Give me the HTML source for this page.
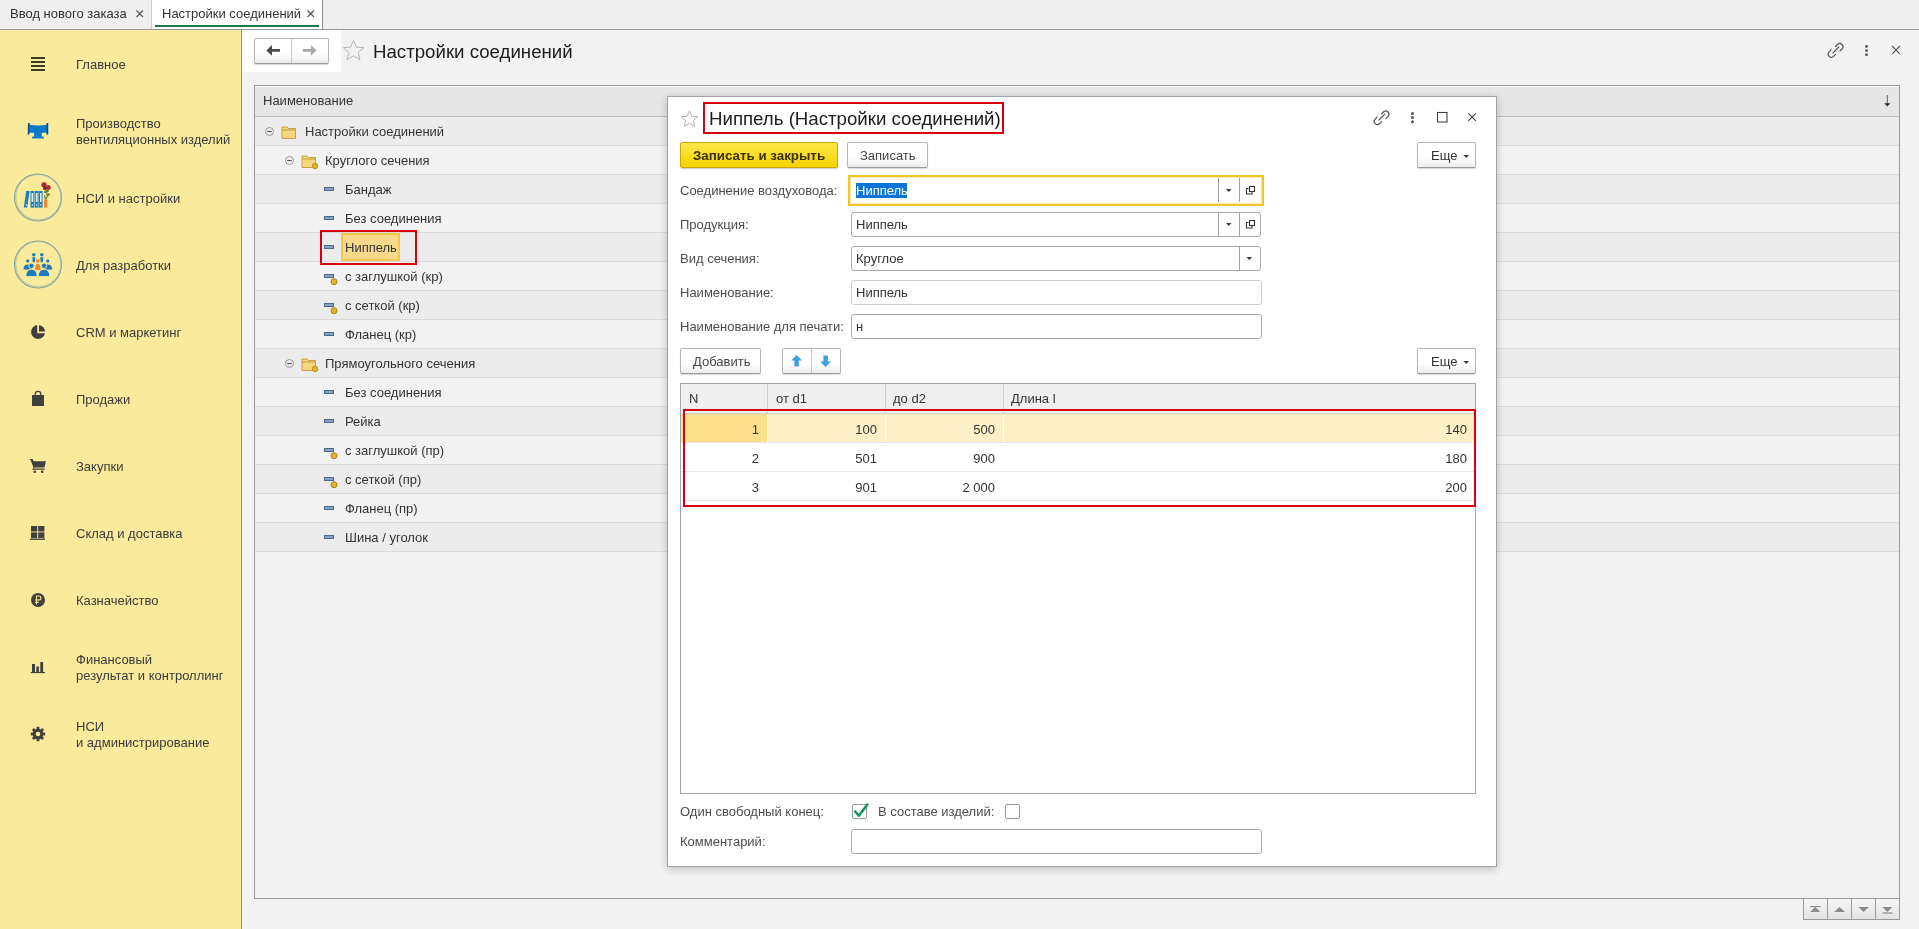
<!DOCTYPE html>
<html><head><meta charset="utf-8">
<style>
*{box-sizing:border-box;margin:0;padding:0}
html,body{width:1919px;height:929px;overflow:hidden;background:#f2f2f2;font-family:"Liberation Sans",sans-serif;font-size:13px;color:#333}
.a{position:absolute}
.t{will-change:transform;position:absolute;white-space:nowrap;line-height:15px;font-size:13px}
svg{position:absolute;overflow:visible}
/* tabs */
#tabbar{left:0;top:0;width:1919px;height:30px;background:#efefef;border-bottom:1px solid #999}
/* sidebar */
#side{left:0;top:30px;width:242px;height:899px;background:#faea9b;border-right:1px solid #9a9170}
.st{color:#3b3b3b}
/* tree */
#tree{left:254px;top:85px;width:1646px;height:814px;border:1px solid #999;background:#f2f2f2}
.th{left:0;top:0;width:1644px;height:31px;background:#e6e6e6;border-bottom:1px solid #bdbdbd;border-top:1px solid #f5f5f5}
.row{position:absolute;left:0;width:1644px;height:29px;border-bottom:1px solid #dadada}
.r1{background:#ececec}.r2{background:#f2f2f2}
/* dialog */
#dlg{left:667px;top:96px;width:830px;height:771px;background:#fff;border:1px solid #a3a3a3;box-shadow:0 2px 8px rgba(0,0,0,.22)}
.btn{position:absolute;height:26px;border:1px solid #b5b5b5;border-bottom-color:#9a9a9a;border-radius:2px;background:linear-gradient(#fff 0%,#fff 60%,#ededed 100%);box-shadow:0 1px 1px rgba(0,0,0,.15)}
.fld{position:absolute;height:25px;border:1px solid #a9a9a9;border-radius:3px;background:#fff}
.lbl{color:#4d4d4d}
.red{position:absolute;border:2px solid #d8000c}
</style></head><body>

<!-- TAB BAR -->
<div id="tabbar" class="a">
  <div class="t" style="left:10px;top:6px;color:#333">Ввод нового заказа</div>
  <div class="a" style="left:151px;top:0;width:1px;height:29px;background:#d0d0d0"></div>
  <div class="a" style="left:152px;top:0;width:171px;height:29px;background:#fff;border-right:1px solid #8a8a8a"></div>
  <div class="t" style="left:162px;top:6px;color:#333">Настройки соединений</div>
  <div class="a" style="left:155px;top:25px;width:164px;height:2px;background:#1d7a46"></div>
  <svg style="left:0;top:0" width="330" height="30"><path d="M136.5 10.5 l6.5 6.5 M143 10.5 l-6.5 6.5 M307.5 10.5 l6.5 6.5 M314 10.5 l-6.5 6.5" stroke="#555" stroke-width="1.1"/></svg>
</div>


<!-- SIDEBAR -->
<div id="side" class="a"></div>
<div class="t st" style="left:76px;top:57px">Главное</div>
<div class="t st" style="left:76px;top:116px">Производство</div>
<div class="t st" style="left:76px;top:132px">вентиляционных изделий</div>
<div class="t st" style="left:76px;top:191px">НСИ и настройки</div>
<div class="t st" style="left:76px;top:258px">Для разработки</div>
<div class="t st" style="left:76px;top:325px">CRM и маркетинг</div>
<div class="t st" style="left:76px;top:392px">Продажи</div>
<div class="t st" style="left:76px;top:459px">Закупки</div>
<div class="t st" style="left:76px;top:526px">Склад и доставка</div>
<div class="t st" style="left:76px;top:593px">Казначейство</div>
<div class="t st" style="left:76px;top:652px">Финансовый</div>
<div class="t st" style="left:76px;top:668px">результат и контроллинг</div>
<div class="t st" style="left:76px;top:719px">НСИ</div>
<div class="t st" style="left:76px;top:735px">и администрирование</div>


<!-- SIDEBAR ICONS -->
<svg style="left:0;top:0" width="242" height="929">
 <g fill="#3e3a2c">
  <rect x="31" y="57" width="14" height="2"/><rect x="31" y="61" width="14" height="2"/><rect x="31" y="65" width="14" height="2"/><rect x="31" y="69" width="14" height="2"/>
 </g>
 <!-- T piece -->
 <path d="M28 123 h1.5 v1.8 q9.5 1.5 17.3 0 v-1.8 h1.5 v11.5 h-1.5 v-1.8 h-5 v3.8 h2 v2 h-11.7 v-2 h2 v-3.8 h-5 v1.8 h-1.5z" fill="#0b7bc9"/>
 <rect x="28" y="123" width="1.4" height="11.5" fill="#0a4f7a"/><rect x="46.6" y="123" width="1.4" height="11.5" fill="#0a4f7a"/>
 <!-- circle icons -->
 <circle cx="38" cy="197.5" r="23.5" fill="none" stroke="#86a392" stroke-width="1.1"/>
 <circle cx="38.3" cy="197.2" r="22.6" fill="none" stroke="#9fb8b0" stroke-width="0.8"/>
 <g>
  <path d="M26.2 191 h3.4 l-2.4 16.6 h-3.4z" fill="#1c7fc6"/>
  <rect x="30.5" y="191" width="3.8" height="16.6" fill="#1c7fc6"/>
  <rect x="34.8" y="191" width="3.8" height="16.6" fill="#1c7fc6"/>
  <rect x="39" y="191" width="3.6" height="16.6" fill="#1c7fc6"/>
  <rect x="31.5" y="193" width="1.8" height="9" fill="#d8ecfa"/><rect x="35.8" y="193" width="1.8" height="9" fill="#d8ecfa"/><rect x="40" y="193" width="1.6" height="9" fill="#d8ecfa"/>
  <circle cx="26.5" cy="205" r=".7" fill="#fff"/><circle cx="32.4" cy="205" r=".7" fill="#fff"/><circle cx="36.7" cy="205" r=".7" fill="#fff"/><circle cx="40.8" cy="205" r=".7" fill="#fff"/>
  <rect x="44" y="199.5" width="3.4" height="8.1" fill="#f08c2a"/>
  <path d="M45.5 199.5 l-1-4 M45.8 199 l2.5-4" stroke="#6b7a30" stroke-width="1.2"/>
  <ellipse cx="46.5" cy="191.5" rx="2.6" ry="1.4" fill="#6d7c34" transform="rotate(-20 46.5 191.5)"/>
  <ellipse cx="48" cy="194.5" rx="2.2" ry="1.2" fill="#7c8a3c"/>
  <circle cx="44" cy="184.8" r="2.6" fill="#a02828"/><circle cx="48.2" cy="187.6" r="2.5" fill="#a83232"/><circle cx="44.8" cy="188.4" r="1.8" fill="#8e2424"/>
 </g>
 <circle cx="38" cy="264.5" r="23.5" fill="none" stroke="#86a392" stroke-width="1.1"/>
 <circle cx="38.3" cy="264.2" r="22.6" fill="none" stroke="#9fb8b0" stroke-width="0.8"/>
 <g fill="#1a7bbf">
  <circle cx="33.8" cy="254.8" r="1.7"/><circle cx="41.8" cy="254.8" r="1.7"/>
  <path d="M32.2 257.3 h3.2 l-.6 5 h-2z"/><path d="M40.2 257.3 h3.2 l-.6 5 h-2z"/>
 </g>
 <g fill="#f08a24"><circle cx="37.8" cy="260.8" r="1.9"/><path d="M35 270 q0-6.5 2.8-6.5 q2.8 0 2.8 6.5z"/></g>
 <g fill="#1a7bbf" stroke="#faea9b" stroke-width="0.9">
  <circle cx="27.8" cy="261" r="2.1"/><circle cx="47.8" cy="261" r="2.1"/>
  <path d="M23 270 q0-6 4.8-6 q4.8 0 4.8 6z"/><path d="M43 270 q0-6 4.8-6 q4.8 0 4.8 6z"/>
  <circle cx="31.5" cy="265.8" r="2.7"/><circle cx="44" cy="265.8" r="2.7"/>
  <path d="M25.8 276.5 q0-7.2 5.7-7.2 q5.7 0 5.7 7.2z"/><path d="M38.3 276.5 q0-7.2 5.7-7.2 q5.7 0 5.7 7.2z"/>
 </g>
 <!-- pie -->
 <path d="M37.2 325 A7 7 0 1 0 45 333.2 L37.2 333.2 Z" fill="#3f3f3f"/>
 <path d="M39 325.2 A6.4 6.4 0 0 1 45 331.4 L39 331.4 Z" fill="#3f3f3f"/>
 <!-- bag -->
 <rect x="32" y="395" width="12" height="11" fill="#3f3f3f"/>
 <path d="M35.2 397 v-2.8 a2.8 2.8 0 0 1 5.6 0 v2.8" stroke="#3f3f3f" stroke-width="1.3" fill="none"/>
 <!-- cart -->
 <path d="M30 459 h2.6 l1 2.2 h12.4 l-1.6 6.4 h-9.8 l-0.5 1 h10.6 v1.2 h-12.4 l1.2-2.3 l-2.8-7.3 h-0.7z" fill="#3f3f3f"/>
 <circle cx="34.8" cy="471.8" r="1.3" fill="#3f3f3f"/><circle cx="42.2" cy="471.8" r="1.3" fill="#3f3f3f"/>
 <!-- grid -->
 <g fill="#3f3f3f"><rect x="31" y="526" width="6.2" height="5.5"/><rect x="38.2" y="526" width="6.2" height="5.5"/><rect x="31" y="532.4" width="6.2" height="5.5"/><rect x="38.2" y="532.4" width="6.2" height="5.5"/><rect x="30.2" y="538.5" width="14.8" height="1.4"/></g>
 <!-- ruble -->
 <circle cx="38" cy="600" r="7" fill="#3f3f3f"/>
 <path d="M36.5 604.5 v-8.5 h2.4 a2 2 0 0 1 0 4 h-3.8 M35 602.2 h4" stroke="#faea9b" stroke-width="1.1" fill="none"/>
 <!-- bars -->
 <g fill="#3f3f3f"><rect x="32" y="664" width="3" height="8"/><rect x="36.3" y="666.5" width="2.6" height="5.5"/><rect x="40.3" y="662" width="2.8" height="10"/><rect x="30.8" y="672" width="14.2" height="1.1"/></g>
 <!-- gear -->
 <g transform="translate(38 734)" fill="#3f3f3f">
  <circle r="5.3"/><rect x="-1.4" y="-7.2" width="2.8" height="3.2" transform="rotate(0)"/><rect x="-1.4" y="-7.2" width="2.8" height="3.2" transform="rotate(45)"/><rect x="-1.4" y="-7.2" width="2.8" height="3.2" transform="rotate(90)"/><rect x="-1.4" y="-7.2" width="2.8" height="3.2" transform="rotate(135)"/><rect x="-1.4" y="-7.2" width="2.8" height="3.2" transform="rotate(180)"/><rect x="-1.4" y="-7.2" width="2.8" height="3.2" transform="rotate(225)"/><rect x="-1.4" y="-7.2" width="2.8" height="3.2" transform="rotate(270)"/><rect x="-1.4" y="-7.2" width="2.8" height="3.2" transform="rotate(315)"/>
  <circle r="2.3" fill="#faea9b"/>
 </g>
</svg>

<!-- white nav patch -->
<div class="a" style="left:242px;top:30px;width:99px;height:42px;background:#fff"></div>


<!-- NAV -->
<div class="btn" style="left:254px;top:38px;width:75px;height:26px"></div>
<div class="a" style="left:291px;top:39px;width:1px;height:24px;background:#c9c9c9"></div>
<svg style="left:0;top:0" width="1919" height="120">
 <path d="M266.4 50.4 l5.6-5.4 v4 h8 v2.8 h-8 v4z" fill="#4a4a4a"/>
 <path d="M316.5 50.4 l-5.6-5.4 v4 h-8 v2.8 h8 v4z" fill="#a9a9a9"/>
 <path d="M353.5 40.5 l2.9 6.6 l7.4 .6 l-5.6 4.8 l1.8 7.2 l-6.5-3.9 l-6.5 3.9 l1.8-7.2 l-5.6-4.8 l7.4-.6z" fill="none" stroke="#b4b4b4" stroke-width="1"/>
 <!-- top-right icons -->
 <g fill="none" stroke="#505050" stroke-width="1.15" stroke-linecap="round">
  <path d="M1835.5 46.5 l2.2-2.2 a3.2 3.2 0 0 1 4.5 4.5 l-2.2 2.2"/>
  <path d="M1835.6 54.4 l-2.2 2.2 a3.2 3.2 0 0 1 -4.5 -4.5 l2.2 -2.2"/>
  <path d="M1833 52.8 l5.8-5.8"/>
 </g>
 <g fill="#5a5a5a"><circle cx="1866.5" cy="46.5" r="1.45"/><circle cx="1866.5" cy="50.6" r="1.45"/><circle cx="1866.5" cy="54.7" r="1.45"/></g>
 <path d="M1892.2 46.2 l7.6 7.6 M1899.8 46.2 l-7.6 7.6" stroke="#4a4a4a" stroke-width="1.1"/>
</svg>
<div class="t" style="left:373px;top:41px;font-size:18.67px;line-height:22px;color:#1c1c1c">Настройки соединений</div>

<!-- TREE -->
<div id="tree" class="a">
 <div class="a th"></div>
 <div class="t" style="left:8px;top:7px;color:#333">Наименование</div>

 <div class="row r1" style="top:31px"></div>
 <div class="t" style="left:50px;top:38px;color:#333">Настройки соединений</div>
 <div class="row r2" style="top:60px"></div>
 <div class="t" style="left:70px;top:67px;color:#333">Круглого сечения</div>
 <div class="row r1" style="top:89px"></div>
 <div class="t" style="left:90px;top:96px;color:#333">Бандаж</div>
 <div class="row r2" style="top:118px"></div>
 <div class="t" style="left:90px;top:125px;color:#333">Без соединения</div>
 <div class="row r1" style="top:147px"></div>
 <div class="t" style="left:90px;top:154px;color:#333">Ниппель</div>
 <div class="row r2" style="top:176px"></div>
 <div class="t" style="left:90px;top:183px;color:#333">с заглушкой (кр)</div>
 <div class="row r1" style="top:205px"></div>
 <div class="t" style="left:90px;top:212px;color:#333">с сеткой (кр)</div>
 <div class="row r2" style="top:234px"></div>
 <div class="t" style="left:90px;top:241px;color:#333">Фланец (кр)</div>
 <div class="row r1" style="top:263px"></div>
 <div class="t" style="left:70px;top:270px;color:#333">Прямоугольного сечения</div>
 <div class="row r2" style="top:292px"></div>
 <div class="t" style="left:90px;top:299px;color:#333">Без соединения</div>
 <div class="row r1" style="top:321px"></div>
 <div class="t" style="left:90px;top:328px;color:#333">Рейка</div>
 <div class="row r2" style="top:350px"></div>
 <div class="t" style="left:90px;top:357px;color:#333">с заглушкой (пр)</div>
 <div class="row r1" style="top:379px"></div>
 <div class="t" style="left:90px;top:386px;color:#333">с сеткой (пр)</div>
 <div class="row r2" style="top:408px"></div>
 <div class="t" style="left:90px;top:415px;color:#333">Фланец (пр)</div>
 <div class="row r1" style="top:437px"></div>
 <div class="t" style="left:90px;top:444px;color:#333">Шина / уголок</div>
 <svg style="left:0;top:0" width="1646" height="40"><path d="M1632.3 9 v11" stroke="#666" stroke-width="1"/><path d="M1629.3 17.2 h6 l-3 3.2z" fill="#333"/></svg>
</div>
<svg style="left:0;top:0" width="1919" height="929">
<circle cx="269.5" cy="131.5" r="4" fill="none" stroke="#9a9a9a" stroke-width="1"/><path d="M267.2 131.5 h4.6" stroke="#555" stroke-width="1.1"/>
<path d="M282 127.0 h5 l1.5 1.5 h7 v10 h-13.5z" fill="#f6d67e" stroke="#caa043" stroke-width="1"/><path d="M282 130.0 h13.5" stroke="#c49a3c" stroke-width="1"/>
<circle cx="289.5" cy="160.5" r="4" fill="none" stroke="#9a9a9a" stroke-width="1"/><path d="M287.2 160.5 h4.6" stroke="#555" stroke-width="1.1"/>
<path d="M302 156.0 h5 l1.5 1.5 h7 v10 h-13.5z" fill="#f6d67e" stroke="#caa043" stroke-width="1"/><path d="M302 159.0 h13.5" stroke="#c49a3c" stroke-width="1"/>
<circle cx="315" cy="166.0" r="2.8" fill="#e0b42a" stroke="#b08a10" stroke-width=".8"/>
<rect x="324.0" y="187.0" width="10" height="4" fill="#4a6889"/><rect x="325.0" y="188.0" width="8" height="2" fill="#86a3c2"/>
<rect x="324.0" y="216.0" width="10" height="4" fill="#4a6889"/><rect x="325.0" y="217.0" width="8" height="2" fill="#86a3c2"/>
<rect x="324.0" y="245.0" width="10" height="4" fill="#4a6889"/><rect x="325.0" y="246.0" width="8" height="2" fill="#86a3c2"/>
<rect x="324.0" y="274.0" width="10" height="4" fill="#4a6889"/><rect x="325.0" y="275.0" width="8" height="2" fill="#86a3c2"/>
<circle cx="334.0" cy="281.7" r="3" fill="#e2b32c" stroke="#9c7a12" stroke-width=".9"/>
<rect x="324.0" y="303.0" width="10" height="4" fill="#4a6889"/><rect x="325.0" y="304.0" width="8" height="2" fill="#86a3c2"/>
<circle cx="334.0" cy="310.7" r="3" fill="#e2b32c" stroke="#9c7a12" stroke-width=".9"/>
<rect x="324.0" y="332.0" width="10" height="4" fill="#4a6889"/><rect x="325.0" y="333.0" width="8" height="2" fill="#86a3c2"/>
<circle cx="289.5" cy="363.5" r="4" fill="none" stroke="#9a9a9a" stroke-width="1"/><path d="M287.2 363.5 h4.6" stroke="#555" stroke-width="1.1"/>
<path d="M302 359.0 h5 l1.5 1.5 h7 v10 h-13.5z" fill="#f6d67e" stroke="#caa043" stroke-width="1"/><path d="M302 362.0 h13.5" stroke="#c49a3c" stroke-width="1"/>
<circle cx="315" cy="369.0" r="2.8" fill="#e0b42a" stroke="#b08a10" stroke-width=".8"/>
<rect x="324.0" y="390.0" width="10" height="4" fill="#4a6889"/><rect x="325.0" y="391.0" width="8" height="2" fill="#86a3c2"/>
<rect x="324.0" y="419.0" width="10" height="4" fill="#4a6889"/><rect x="325.0" y="420.0" width="8" height="2" fill="#86a3c2"/>
<rect x="324.0" y="448.0" width="10" height="4" fill="#4a6889"/><rect x="325.0" y="449.0" width="8" height="2" fill="#86a3c2"/>
<circle cx="334.0" cy="455.7" r="3" fill="#e2b32c" stroke="#9c7a12" stroke-width=".9"/>
<rect x="324.0" y="477.0" width="10" height="4" fill="#4a6889"/><rect x="325.0" y="478.0" width="8" height="2" fill="#86a3c2"/>
<circle cx="334.0" cy="484.7" r="3" fill="#e2b32c" stroke="#9c7a12" stroke-width=".9"/>
<rect x="324.0" y="506.0" width="10" height="4" fill="#4a6889"/><rect x="325.0" y="507.0" width="8" height="2" fill="#86a3c2"/>
<rect x="324.0" y="535.0" width="10" height="4" fill="#4a6889"/><rect x="325.0" y="536.0" width="8" height="2" fill="#86a3c2"/>
</svg>

<!-- DIALOG -->
<div id="dlg" class="a"></div>
<svg style="left:0;top:0" width="1919" height="929">
 <path d="M689.5 110.8 l2.4 5.4 l5.9 .5 l-4.5 3.9 l1.4 5.8 l-5.2-3.1 l-5.2 3.1 l1.4-5.8 l-4.5-3.9 l5.9-.5z" fill="none" stroke="#b4b4b4" stroke-width="1"/>
 <g fill="none" stroke="#505050" stroke-width="1.15" stroke-linecap="round">
  <path d="M1381.5 114 l2.2-2.2 a3.2 3.2 0 0 1 4.5 4.5 l-2.2 2.2"/>
  <path d="M1381.6 121.6 l-2.2 2.2 a3.2 3.2 0 0 1 -4.5 -4.5 l2.2 -2.2"/>
  <path d="M1379 120 l5.8-5.8"/>
 </g>
 <g fill="#555"><circle cx="1412.5" cy="113.5" r="1.5"/><circle cx="1412.5" cy="117.6" r="1.5"/><circle cx="1412.5" cy="121.7" r="1.5"/></g>
 <rect x="1437.5" y="112.5" width="9.5" height="9.5" fill="none" stroke="#444" stroke-width="1.1"/>
 <path d="M1468.3 113.3 l7.6 7.6 M1475.9 113.3 l-7.6 7.6" stroke="#444" stroke-width="1.2"/>
</svg>
<div class="t" style="left:709px;top:108px;font-size:18.67px;line-height:22px;color:#1c1c1c">Ниппель (Настройки соединений)</div>
<div class="red" style="left:703px;top:102px;width:301px;height:32px"></div>

<!-- buttons -->
<div class="a" style="left:680px;top:142px;width:158px;height:26px;border:1px solid #c9a800;border-radius:2px;background:linear-gradient(#ffe84a,#f4d300);box-shadow:0 1px 1px rgba(0,0,0,.2)"></div>
<div class="t" style="left:693px;top:148px;font-weight:bold;font-size:13.33px;color:#3a3000">Записать и закрыть</div>
<div class="btn" style="left:847px;top:142px;width:81px;height:26px"></div>
<div class="t" style="left:860px;top:148px;color:#444">Записать</div>
<div class="btn" style="left:1417px;top:142px;width:59px;height:26px"></div>
<div class="t" style="left:1431px;top:148px;color:#333">Еще</div>
<svg style="left:0;top:0" width="1919" height="929"><path d="M1463.3 155 h5.8 l-2.9 3z" fill="#444"/></svg>

<!-- fields -->
<div class="t lbl" style="left:680px;top:183px">Соединение воздуховода:</div>
<div class="a" style="left:848px;top:175px;width:416px;height:31px;border:2px solid #f2c62c;box-shadow:inset 0 0 0 1px #fbeab0;background:#fff"></div>
<div class="a" style="left:856px;top:183px;width:51px;height:15px;background:#0a74d8"></div>
<div class="t" style="left:856px;top:183px;color:#fff">Ниппель</div>
<div class="a" style="left:1218px;top:178px;width:1px;height:24px;background:#a0a0a0"></div>
<div class="a" style="left:1239px;top:178px;width:1px;height:24px;background:#a0a0a0"></div>

<div class="t lbl" style="left:680px;top:217px">Продукция:</div>
<div class="fld" style="left:851px;top:212px;width:410px"></div>
<div class="t" style="left:856px;top:217px">Ниппель</div>
<div class="a" style="left:1218px;top:213px;width:1px;height:23px;background:#a0a0a0"></div>
<div class="a" style="left:1239px;top:213px;width:1px;height:23px;background:#a0a0a0"></div>

<div class="t lbl" style="left:680px;top:251px">Вид сечения:</div>
<div class="fld" style="left:851px;top:246px;width:410px"></div>
<div class="t" style="left:856px;top:251px">Круглое</div>
<div class="a" style="left:1239px;top:247px;width:1px;height:23px;background:#a0a0a0"></div>

<div class="t lbl" style="left:680px;top:285px">Наименование:</div>
<div class="fld" style="left:851px;top:280px;width:411px;border-color:#cdcdcd"></div>
<div class="t" style="left:856px;top:285px">Ниппель</div>

<div class="t lbl" style="left:680px;top:319px">Наименование для печати:</div>
<div class="fld" style="left:851px;top:314px;width:411px"></div>
<div class="t" style="left:856px;top:319px">н</div>

<svg style="left:0;top:0" width="1919" height="929">
 <path d="M1226 189 h5.5 l-2.75 3z" fill="#3a3a3a"/>
 <path d="M1226 223 h5.5 l-2.75 3z" fill="#3a3a3a"/>
 <path d="M1246.5 257 h5.5 l-2.75 3z" fill="#3a3a3a"/>
 <g fill="none" stroke="#333" stroke-width="1.1">
  <path d="M1248.5 188.5 h-2 v5.5 h5.5 v-2"/><rect x="1249.5" y="186.5" width="5" height="5"/>
  <path d="M1248.5 222.5 h-2 v5.5 h5.5 v-2"/><rect x="1249.5" y="220.5" width="5" height="5"/>
 </g>
</svg>

<!-- table toolbar -->
<div class="btn" style="left:680px;top:348px;width:81px;height:26px"></div>
<div class="t" style="left:693px;top:354px;color:#444">Добавить</div>
<div class="btn" style="left:782px;top:348px;width:59px;height:26px"></div>
<div class="a" style="left:811px;top:349px;width:1px;height:24px;background:#c9c9c9"></div>
<svg style="left:0;top:0" width="1919" height="929">
 <path d="M796.6 355 l5.4 5.6 h-3.2 v6 h-4.4 v-6 h-3.2z" fill="#3d9fe0"/>
 <path d="M825.6 367 l5.4 -5.6 h-3.2 v-6 h-4.4 v6 h-3.2z" fill="#3d9fe0"/>
</svg>
<div class="btn" style="left:1417px;top:348px;width:59px;height:26px"></div>
<div class="t" style="left:1431px;top:354px;color:#333">Еще</div>
<svg style="left:0;top:0" width="1919" height="929"><path d="M1463.3 361 h5.8 l-2.9 3z" fill="#444"/></svg>


<!-- GRID TABLE -->
<div class="a" style="left:680px;top:383px;width:796px;height:411px;border:1px solid #a5a5a5;background:#fff"></div>
<div class="a" style="left:681px;top:384px;width:794px;height:30px;background:#efefef;border-bottom:1px solid #d5d5d5"></div>
<div class="a" style="left:767px;top:384px;width:1px;height:30px;background:#d0d0d0"></div>
<div class="a" style="left:885px;top:384px;width:1px;height:30px;background:#d0d0d0"></div>
<div class="a" style="left:1003px;top:384px;width:1px;height:30px;background:#d0d0d0"></div>
<div class="t" style="left:689px;top:391px">N</div>
<div class="t" style="left:776px;top:391px">от d1</div>
<div class="t" style="left:893px;top:391px">до d2</div>
<div class="t" style="left:1011px;top:391px">Длина l</div>
<!-- rows -->
<div class="a" style="left:681px;top:414px;width:794px;height:29px;background:#fdf0c6;border-bottom:1px solid #e6e6e6"></div>
<div class="a" style="left:681px;top:414px;width:86px;height:28px;background:#fde08c"></div>
<div class="a" style="left:767px;top:414px;width:1px;height:28px;background:#fff"></div>
<div class="a" style="left:885px;top:414px;width:1px;height:28px;background:#fff"></div>
<div class="a" style="left:1003px;top:414px;width:1px;height:28px;background:#fff"></div>
<div class="a" style="left:681px;top:443px;width:794px;height:29px;background:#fff;border-bottom:1px solid #e6e6e6"></div>
<div class="a" style="left:681px;top:472px;width:794px;height:29px;background:#fff;border-bottom:1px solid #e6e6e6"></div>
<div class="t" style="left:681px;top:422px;width:78px;text-align:right">1</div>
<div class="t" style="left:768px;top:422px;width:109px;text-align:right">100</div>
<div class="t" style="left:886px;top:422px;width:109px;text-align:right">500</div>
<div class="t" style="left:1004px;top:422px;width:463px;text-align:right">140</div>
<div class="t" style="left:681px;top:451px;width:78px;text-align:right">2</div>
<div class="t" style="left:768px;top:451px;width:109px;text-align:right">501</div>
<div class="t" style="left:886px;top:451px;width:109px;text-align:right">900</div>
<div class="t" style="left:1004px;top:451px;width:463px;text-align:right">180</div>
<div class="t" style="left:681px;top:480px;width:78px;text-align:right">3</div>
<div class="t" style="left:768px;top:480px;width:109px;text-align:right">901</div>
<div class="t" style="left:886px;top:480px;width:109px;text-align:right">2 000</div>
<div class="t" style="left:1004px;top:480px;width:463px;text-align:right">200</div>
<div class="red" style="left:683px;top:409px;width:793px;height:98px"></div>

<!-- bottom -->
<div class="t lbl" style="left:680px;top:804px">Один свободный конец:</div>
<div class="a" style="left:852px;top:804px;width:15px;height:15px;border:1px solid #9a9a9a;border-radius:2px;background:#fff"></div>
<svg style="left:0;top:0" width="1919" height="929"><path d="M855.2 811.5 l3.6 4.2 l8.6-11.2" fill="none" stroke="#17955a" stroke-width="2.6" stroke-linecap="round" stroke-linejoin="round"/></svg>
<div class="t lbl" style="left:878px;top:804px">В составе изделий:</div>
<div class="a" style="left:1005px;top:804px;width:15px;height:15px;border:1px solid #9a9a9a;border-radius:2px;background:#fff"></div>
<div class="t lbl" style="left:680px;top:834px">Комментарий:</div>
<div class="fld" style="left:851px;top:829px;width:411px;height:25px"></div>

<!-- tree red box & selection -->
<div class="a" style="left:341px;top:233px;width:59px;height:28px;background:#f6d98a;border:2px solid #f0c94a"></div>
<div class="t" style="left:345px;top:240px;color:#333">Ниппель</div>
<div class="red" style="left:320px;top:230px;width:97px;height:35px"></div>

<!-- scroll buttons -->
<div class="a" style="left:1803px;top:898px;width:97px;height:22px;border:1px solid #999;background:linear-gradient(#f6f6f6,#e4e4e4)"></div>
<div class="a" style="left:1827px;top:899px;width:1px;height:20px;background:#999"></div>
<div class="a" style="left:1851px;top:899px;width:1px;height:20px;background:#999"></div>
<div class="a" style="left:1875px;top:899px;width:1px;height:20px;background:#999"></div>
<svg style="left:0;top:0" width="1919" height="929"><g fill="#8a8a8a">
 <rect x="1810" y="906" width="10.5" height="1.2"/><path d="M1810.2 912 l5 -5 l5 5z"/>
 <path d="M1834.2 912 l5.3 -5 l5.3 5z"/>
 <path d="M1858.3 907 l5.3 5 l5.3 -5z"/>
 <path d="M1882.3 907 l5 5 l5 -5z"/><rect x="1882.5" y="912.4" width="10" height="1.2"/>
</g></svg>

</body></html>
